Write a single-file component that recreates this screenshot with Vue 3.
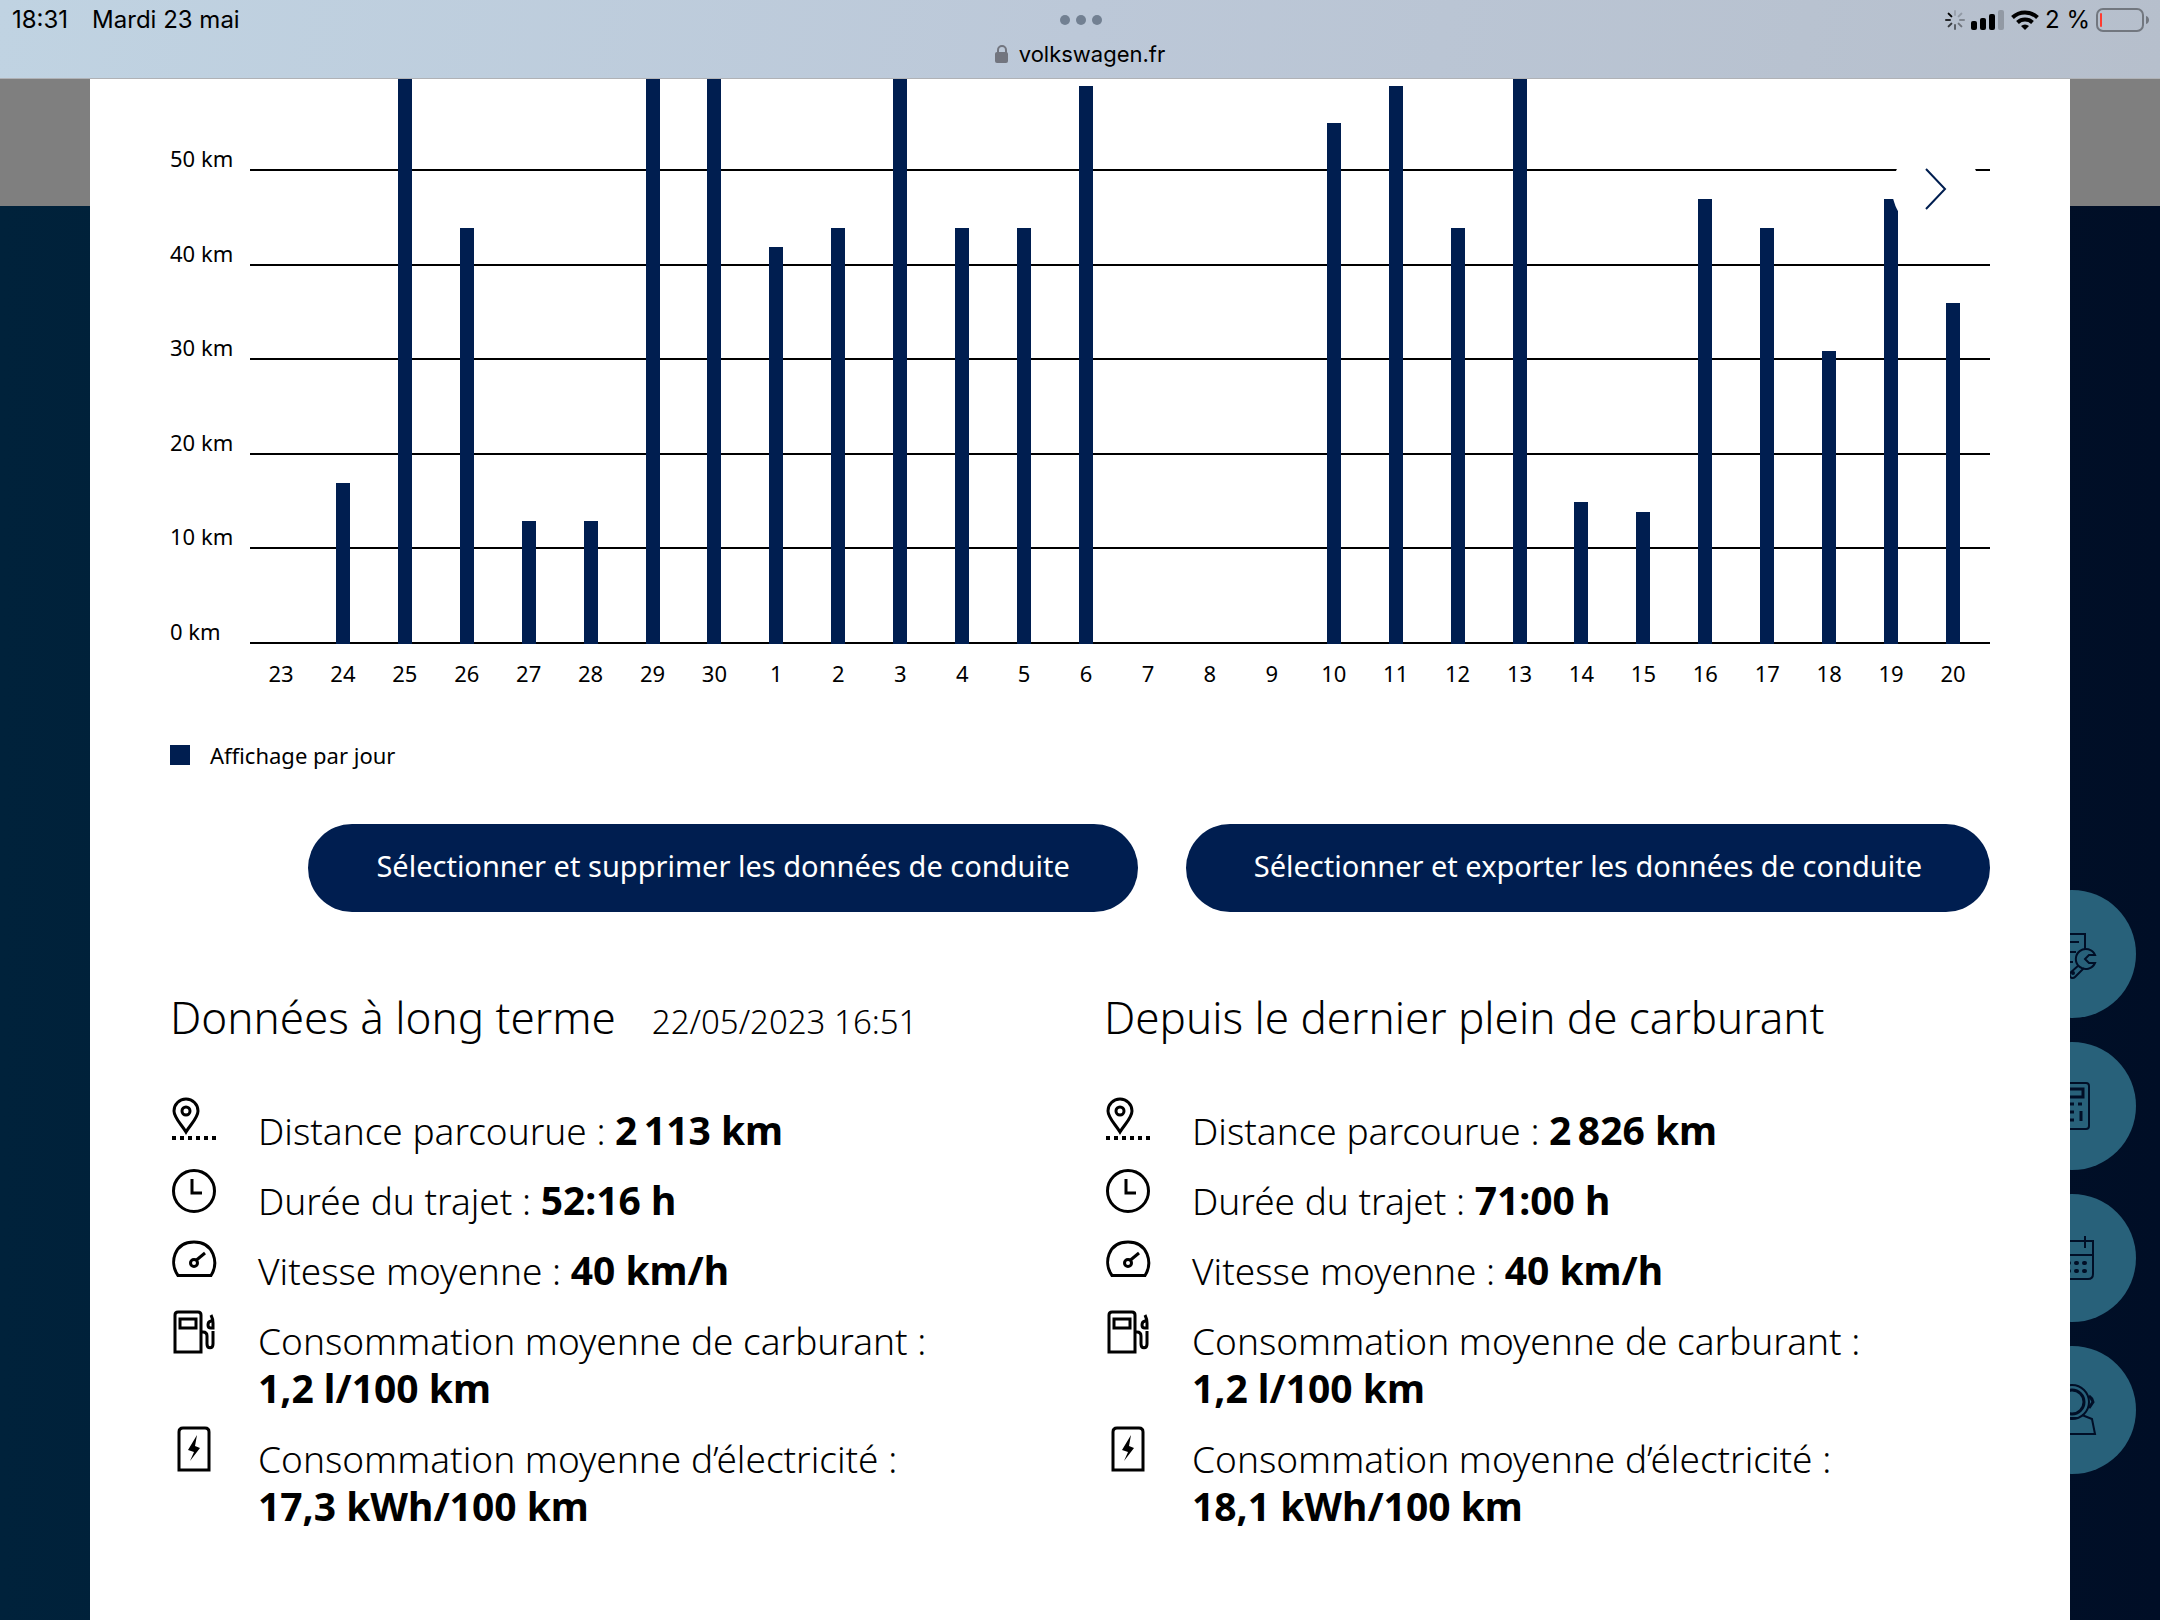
<script setup>
const AXIS_TOP = 59.7

const days = [
  [23, 0], [24, 17], [25, 70], [26, 44], [27, 13], [28, 13], [29, 70], [30, 70],
  [1, 42], [2, 44], [3, 70], [4, 44], [5, 44], [6, 59], [7, 0], [8, 0], [9, 0],
  [10, 55], [11, 59], [12, 44], [13, 70], [14, 15], [15, 14], [16, 47], [17, 44],
  [18, 31], [19, 47], [20, 36],
].map(([day, km]) => ({ day, height: Math.min(100, (km / AXIS_TOP) * 100) + '%' }))

const ticks = [50, 40, 30, 20, 10, 0]

const metrics = (distance, duration, speed, fuel, power) => [
  { icon: 'pin', label: 'Distance parcourue :', value: distance },
  { icon: 'clock', label: 'Durée du trajet :', value: duration },
  { icon: 'gauge', label: 'Vitesse moyenne :', value: speed },
  { icon: 'pump', label: 'Consommation moyenne de carburant :', value: fuel, stacked: true },
  { icon: 'battery', label: 'Consommation moyenne d’électricité :', value: power, stacked: true },
]

const sections = [
  {
    title: 'Données à long terme',
    date: '22/05/2023 16:51',
    rows: metrics('2\u2009113 km', '52:16 h', '40 km/h', '1,2 l/100 km', '17,3 kWh/100 km'),
  },
  {
    title: 'Depuis le dernier plein de carburant',
    rows: metrics('2\u2009826 km', '71:00 h', '40 km/h', '1,2 l/100 km', '18,1 kWh/100 km'),
  },
]
</script>

<template>
  <div class="page">
    <header class="browser">
      <div class="status">
        <div class="status-left">
          <span>18:31</span>
          <span>Mardi 23 mai</span>
        </div>
        <div class="dots"><i></i><i></i><i></i></div>
        <div class="status-right">
          <svg class="spinner" width="20" height="20" viewBox="0 0 20 20" stroke="#000" stroke-width="2" stroke-linecap="round">
            <path d="M10 1v4" opacity=".15" />
            <path d="M16.400 3.600l-2.800 2.800" opacity=".2" />
            <path d="M19 10h-4" opacity=".3" />
            <path d="M16.400 16.400l-2.800-2.800" opacity=".4" />
            <path d="M10 19v-4" opacity=".5" />
            <path d="M3.600 16.400l2.800-2.800" opacity=".7" />
            <path d="M1 10h4" opacity=".8" />
            <path d="M3.600 3.600l2.800 2.800" />
          </svg>
          <svg width="34" height="22" viewBox="0 0 34 22">
            <rect x="0" y="12" width="6" height="9" rx="2" />
            <rect x="9" y="9" width="6" height="12" rx="2" />
            <rect x="18" y="5" width="6" height="16" rx="2" />
            <rect x="27" y="1" width="6" height="20" rx="2" opacity=".2" />
          </svg>
          <svg width="28" height="20" viewBox="0 0 28 20" fill="none" stroke="#000" stroke-width="4">
            <path d="M1.500 7.500a18 18 0 0 1 25 0" />
            <path d="M6.500 12.500a11 11 0 0 1 15 0" />
            <path d="M14 20l-4-4a6 6 0 0 1 8 0z" fill="#000" stroke="none" />
          </svg>
          <span>2 %</span>
          <svg width="54" height="24" viewBox="0 0 54 24">
            <rect x="1" y="1" width="46" height="22" rx="6" fill="none" stroke="#72777f" stroke-width="2" />
            <rect x="4" y="5" width="2" height="14" rx="1" fill="#ff3b30" />
            <path d="M50 8c4 1 4 7 0 8z" fill="#72777f" />
          </svg>
        </div>
      </div>
      <div class="url">
        <svg width="14" height="20" viewBox="0 0 14 20">
          <path d="M3 9V6a4 4 0 0 1 8 0v3" fill="none" stroke="#72757f" stroke-width="2" />
          <rect x="0" y="8" width="13" height="11" rx="2" fill="#72757f" />
        </svg>
        <span>volkswagen.fr</span>
      </div>
    </header>

    <div class="backdrop">
      <nav class="float-nav" aria-label="Accès rapide">
        <button type="button" aria-label="Entretien">
          <svg viewBox="0 0 48 48">
            <path d="M11 44V4h26v16M17 12h14M17 22h11M17 32h8" />
            <path d="M47 25a10 10 0 1 0 0 8h-6l-4-4 4-4zM31 35l-9 8c-2 5 3 6 5 4l9-9" />
            <circle cx="25" cy="43" r="1" />
          </svg>
        </button>
        <button type="button" aria-label="Calculateur">
          <svg viewBox="0 0 48 48">
            <rect x="7" y="1" width="34" height="46" rx="3" />
            <rect x="13" y="7" width="22" height="8" stroke-width="3" />
            <path d="M14 22h4M22 22h4M30 22h4M14 30h4M22 30h4M14 38h4M22 38h4M33 29v10" stroke-width="3" />
          </svg>
        </button>
        <button type="button" aria-label="Rendez-vous">
          <svg viewBox="0 0 48 48">
            <path d="M3 7h42v33q0 5-5 5H8q-5 0-5-5zM3 21h42M11 2v12M37 2v12" />
            <path d="M12 29h1M20 29h1M28 29h1M36 29h1M12 37h1M20 37h1M28 37h1M36 37h1" stroke-width="4" stroke-linecap="round" />
          </svg>
        </button>
        <button type="button" aria-label="Contact">
          <svg viewBox="0 0 48 48">
            <circle cx="24" cy="16" r="17" />
            <circle cx="24" cy="16" r="12" stroke-width="3" />
            <path d="M41 10q3 2 4 6l-4 6" stroke-width="3" />
            <path d="M12 30L3 33 1 48h46l-3-15-10-4M22 32h8" />
          </svg>
        </button>
      </nav>

      <main class="modal">
        <section class="chart" aria-label="Distance par jour">
          <div class="axis">
            <span v-for="t in ticks" :key="t" class="tick">{{ t }} km</span>
          </div>
          <div class="plot">
            <div class="grid-lines"><i v-for="t in ticks" :key="t"></i></div>
            <div class="bars">
              <div v-for="d in days" :key="d.day" class="slot">
                <div class="bar" :style="{ height: d.height }"></div>
              </div>
            </div>
          </div>
          <div class="day-labels">
            <span v-for="d in days" :key="d.day">{{ d.day }}</span>
          </div>
          <button type="button" class="next" aria-label="Suivant">
            <svg width="24" height="44" viewBox="0 0 24 44" fill="none" stroke="#001e50" stroke-width="2">
              <path d="M2 2l19 20L2 42" />
            </svg>
          </button>
        </section>

        <div class="legend"><i></i><span>Affichage par jour</span></div>

        <div class="actions">
          <button type="button">Sélectionner et supprimer les données de conduite</button>
          <button type="button">Sélectionner et exporter les données de conduite</button>
        </div>

        <div class="sections">
          <section v-for="s in sections" :key="s.title">
            <div class="heading">
              <h2>{{ s.title }}</h2>
              <time v-if="s.date">{{ s.date }}</time>
            </div>
            <ul>
              <li v-for="r in s.rows" :key="r.icon">
                <svg class="icon" viewBox="0 0 48 48">
                  <template v-if="r.icon === 'pin'">
                    <path d="M16 35C12 28 4 21 4 14a12 12 0 0 1 24 0c0 7-8 14-12 21z" />
                    <circle cx="16" cy="14" r="4" />
                    <path d="M2 41h44" stroke-width="4" stroke-dasharray="4 4" />
                  </template>
                  <template v-else-if="r.icon === 'clock'">
                    <circle cx="24" cy="24" r="20.500" />
                    <path d="M22 12v14h10" />
                  </template>
                  <template v-else-if="r.icon === 'gauge'">
                    <path d="M8 38.500C-1 26 4 5 24 5s25 21 17 33.500z" />
                    <circle cx="24" cy="26" r="3.500" />
                    <path d="M26.500 23L35 16" />
                  </template>
                  <template v-else-if="r.icon === 'pump'">
                    <path d="M5 45V8q0-3 3-3h20q3 0 3 3v37z" />
                    <path d="M10 12h16v9H10z" />
                    <path d="M31 25h2q4 0 4 4v8c0 5 6 5 6 0V24M41 8q2 4 2 8v5h-2c-4 0-4-6 0-7h2" />
                  </template>
                  <template v-else>
                    <path d="M9 45V7q0-4 4-4h22q4 0 4 4v38z" />
                    <path d="M27 10l-9 15 6 2-4 9 10-13-5-2z" fill="#000" stroke="none" />
                  </template>
                </svg>
                <p>{{ r.label }} <br v-if="r.stacked" /><b>{{ r.value }}</b></p>
              </li>
            </ul>
          </section>
        </div>
      </main>
    </div>
  </div>
</template>

<style>
body {
  margin: 0;
}
</style>

<style scoped>
.page {
  min-height: 100vh;
  display: flex;
  flex-direction: column;
  font-family: "Noto Sans", "Open Sans", sans-serif;
  color: #000;
}
button {
  border: 0;
  padding: 0;
  font: inherit;
  cursor: pointer;
}
.browser {
  background: linear-gradient(100deg, #c0d3e2, #bcc8d8 50%, #b6bfcc);
  border-bottom: 1px solid #b0b2b6;
  font: 24px/28px Inter, sans-serif;
  height: 78px;
}
.status {
  display: grid;
  grid-template-columns: 1fr auto 1fr;
  align-items: center;
  height: 40px;
  padding: 0 10px 0 12px;
}
.status-left,
.status-right {
  display: flex;
  align-items: center;
}
.status-left {
  gap: 24px;
}
.status-right {
  justify-content: flex-end;
  gap: 6px;
}
.dots {
  display: flex;
  gap: 6px;
}
.dots i {
  width: 10px;
  height: 10px;
  border-radius: 50%;
  background: #728092;
}
.url {
  display: flex;
  justify-content: center;
  align-items: center;
  gap: 10px;
  font-size: 22px;
}
.backdrop {
  flex: 1;
  position: relative;
  padding: 0 90px;
  display: flex;
  background:
    linear-gradient(#7f7f7f, #7f7f7f) 0 0 / 100% 127px no-repeat,
    linear-gradient(to right, #00223b, #000e26);
}
.float-nav {
  position: absolute;
  top: 811px;
  right: 24px;
  display: flex;
  flex-direction: column;
  gap: 24px;
}
.float-nav button {
  display: flex;
  align-items: center;
  justify-content: center;
  width: 128px;
  height: 128px;
  border-radius: 50%;
  background: #28617a;
}
.float-nav svg {
  width: 48px;
  height: 48px;
  overflow: visible;
  fill: none;
  stroke: #000e26;
  stroke-width: 2;
}
.modal {
  flex: 1;
  min-width: 0;
  position: relative;
  background: #fff;
  padding: 0 80px 80px;
}
.chart {
  position: relative;
  display: grid;
  grid-template-columns: 80px 1fr;
  grid-template-rows: 565px auto;
  font-size: 22px;
}
.axis,
.grid-lines {
  display: grid;
  grid-template-rows: 92px repeat(5, 1fr);
}
.tick {
  align-self: end;
  line-height: 20px;
  padding-bottom: 3px;
}
.plot {
  display: grid;
}
.grid-lines,
.bars {
  grid-area: 1 / 1;
}
.grid-lines i {
  border-bottom: 2px solid #000;
}
.bars,
.day-labels {
  display: grid;
  grid-template-columns: repeat(28, 1fr);
  padding-right: 6px;
}
.slot {
  display: flex;
  align-items: flex-end;
  justify-content: center;
}
.bar {
  width: 14px;
  background: #001e50;
}
.day-labels {
  grid-column: 2;
  padding-top: 15px;
  line-height: 28px;
  text-align: center;
}
.next {
  position: absolute;
  top: 66px;
  right: 10px;
  width: 88px;
  height: 88px;
  border-radius: 50%;
  background: #fff;
  display: flex;
  align-items: center;
  justify-content: center;
}
.legend {
  display: flex;
  align-items: center;
  gap: 20px;
  margin-top: 54px;
  font-size: 22px;
  line-height: 28px;
}
.legend i {
  width: 20px;
  height: 20px;
  background: #001e50;
}
.actions {
  display: flex;
  justify-content: flex-end;
  gap: 48px;
  margin-top: 55px;
}
.actions button {
  height: 88px;
  padding: 0 68px 6px;
  border-radius: 44px;
  background: #001e50;
  color: #fff;
  font-size: 29px;
  white-space: nowrap;
}
.sections {
  display: grid;
  grid-template-columns: 1fr 1fr;
  gap: 48px;
  margin-top: 75px;
}
.heading {
  display: flex;
  align-items: baseline;
  gap: 36px;
  height: 60px;
  line-height: 60px;
  white-space: nowrap;
}
h2 {
  margin: 0;
  font-size: 44px;
  font-weight: 300;
}
time {
  font-size: 33px;
  font-weight: 300;
}
ul {
  list-style: none;
  margin: 50px 0 0;
  padding: 0;
  display: flex;
  flex-direction: column;
  gap: 12px;
}
li {
  display: grid;
  grid-template-columns: 88px 1fr;
}
.icon {
  width: 48px;
  height: 48px;
  fill: none;
  stroke: #000;
  stroke-width: 3;
}
p {
  margin: 0;
  padding-top: 10px;
  font-size: 37px;
  line-height: 48px;
  font-weight: 300;
  white-space: nowrap;
}
b {
  font-size: 39px;
  line-height: 1;
  font-weight: 700;
}
</style>
